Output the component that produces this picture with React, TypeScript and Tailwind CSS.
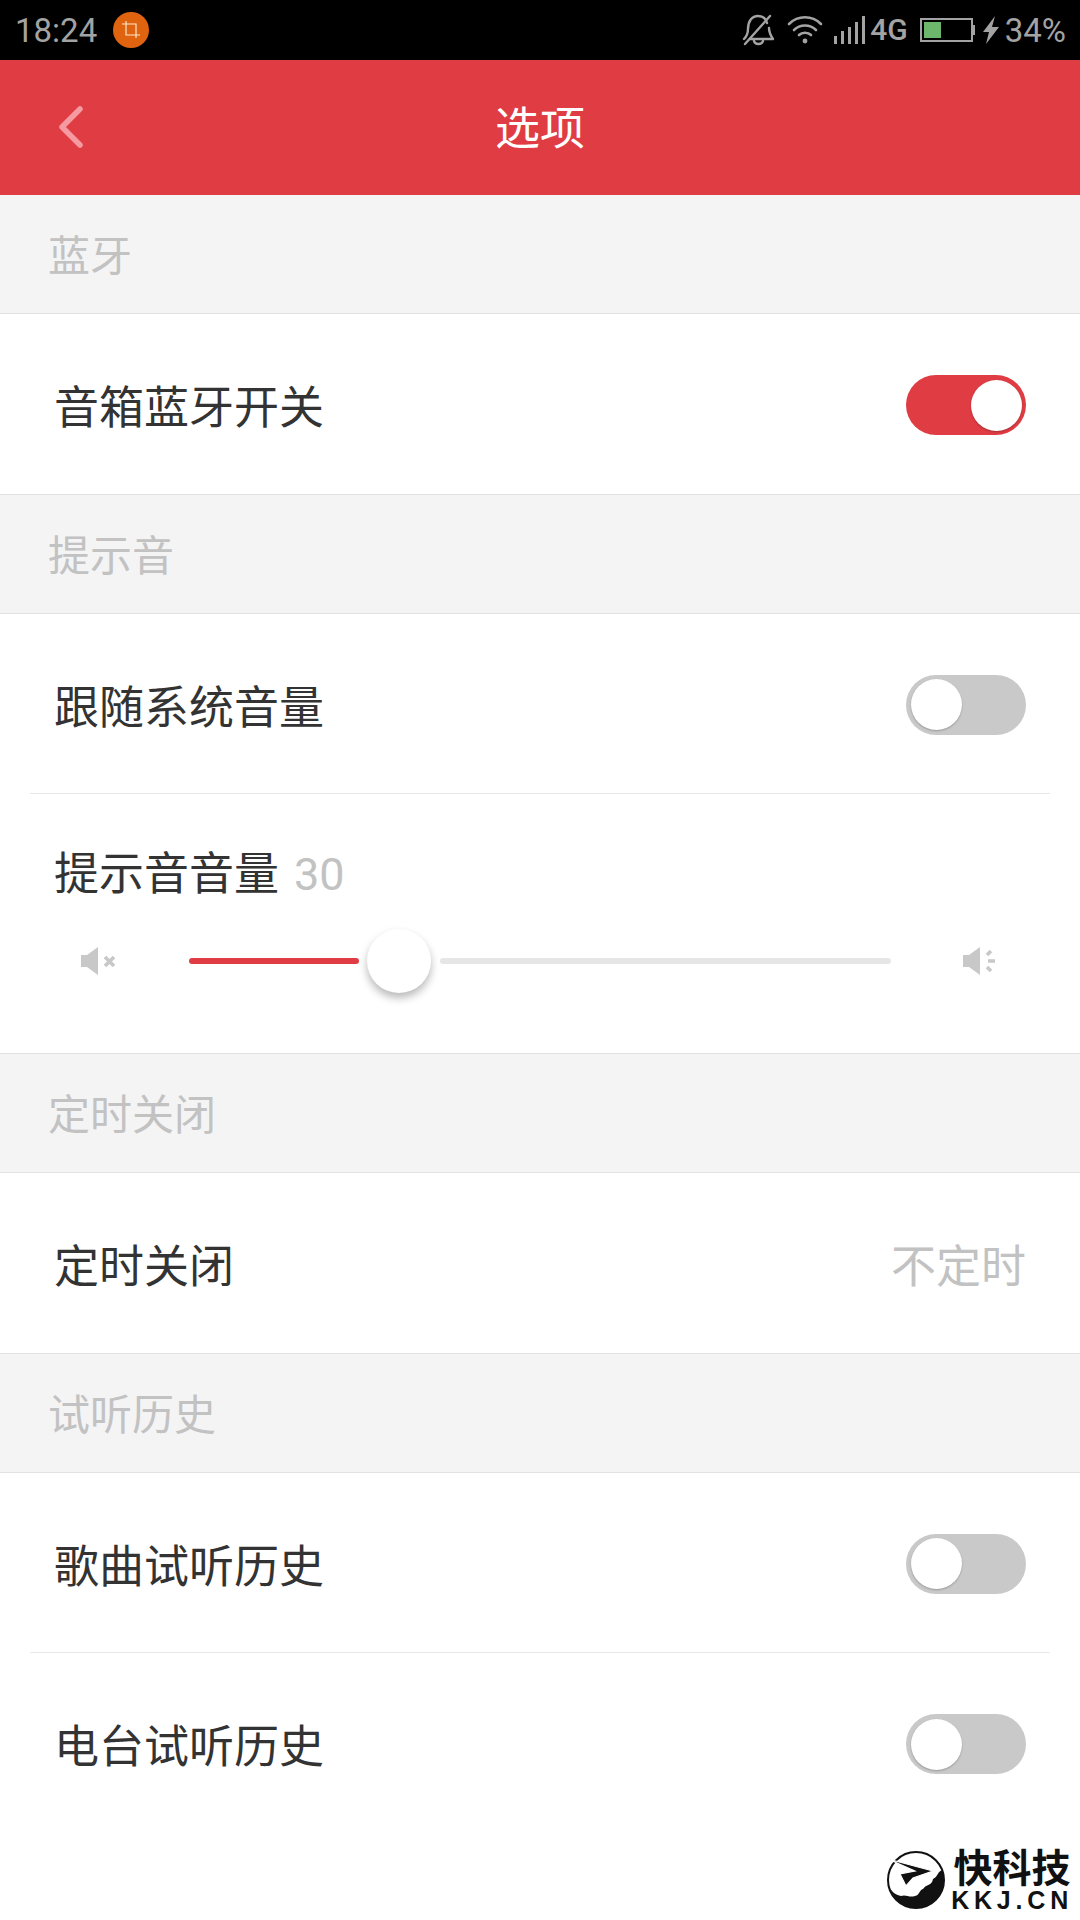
const cjk = "font-['Roboto','Noto_Sans_CJK_SC',sans-serif]";

function Toggle({ on = false }: { on?: boolean }) {
  return (
    <div
      className={`mt-[2px] flex h-[60px] w-[120px] items-center rounded-full ${
        on ? "justify-end bg-[#df3c43] pr-[4px]" : "justify-start bg-[#c9c9c9] pl-[5px]"
      }`}
    >
      <div className="h-[51px] w-[51px] rounded-full bg-white shadow-[0_1px_2px_rgba(0,0,0,0.25)]" />
    </div>
  );
}

function SectionHeader({ title }: { title: string }) {
  return (
    <div className="flex h-[119px] items-center border-b border-[#e2e2e2] bg-[#f4f4f5] pl-[48px] pt-[5px] text-[42px] text-[#c2c2c2]">
      {title}
    </div>
  );
}

function Row({
  title,
  children,
  divider = false,
}: {
  title: string;
  children: React.ReactNode;
  divider?: boolean;
}) {
  return (
    <div className="px-[30px]">
      <div
        className={`flex h-[180px] items-center justify-between pl-[24px] pr-[24px] ${
          divider ? "border-b border-[#e8e8e8]" : ""
        }`}
      >
        <span className="pt-[10px] text-[45px] text-[#333333]">{title}</span>
        {children}
      </div>
    </div>
  );
}

function StatusBar() {
  return (
    <div className="flex h-[60px] items-center justify-between bg-black pl-[15px] pr-[14px] text-[#a3a3a3]">
      <div className="flex items-center gap-[16px]">
        <span className="text-[33px] leading-none">18:24</span>
        <div className="flex h-[36px] w-[36px] items-center justify-center rounded-full bg-[#e0640f]">
          <svg width="20" height="20" viewBox="0 0 20 20" fill="none" stroke="#fde6c8" strokeWidth="1.2">
            <path d="M1 4h14v14M5 1v14h14" />
          </svg>
        </div>
      </div>
      <div className="flex items-center">
        <svg width="32" height="34" viewBox="0 0 32 34" fill="none" stroke="#a3a3a3" strokeWidth="2.4" strokeLinejoin="round" strokeLinecap="round" className="mr-[13px]">
          <path d="M2 26c3-3 4-5 4-10 0-8 4-13 10-13 5 0 8 3 9 7M27 15c0 5 2 8 4 11H8M12 28c1 4 8 4 9 0" />
          <path d="M3 31 28 3" />
        </svg>
        <svg width="36" height="30" viewBox="0 0 36 30" fill="none" stroke="#a3a3a3" strokeWidth="2.6" strokeLinecap="round" className="mr-[11px]">
          <path d="M2 9c9-9 23-9 32 0M7 15c6-6 16-6 22 0M12 20c3-3 9-3 12 0" />
          <circle cx="18" cy="26" r="2.4" fill="#a3a3a3" stroke="none" />
        </svg>
        <svg width="32" height="28" viewBox="0 0 32 28" fill="#a3a3a3" className="mr-[4px]">
          <rect x="0" y="20" width="3" height="8" />
          <rect x="7" y="15" width="3" height="13" />
          <rect x="14" y="11" width="3" height="17" />
          <rect x="21" y="6" width="3" height="22" />
          <rect x="28" y="0" width="3" height="28" />
        </svg>
        <span className="mr-[12px] text-[30px] font-medium leading-none">4G</span>
        <div className="mr-[8px] flex items-center">
          <div className="flex h-[24px] w-[53px] items-center border-2 border-[#a3a3a3] p-[2px]">
            <div className="h-full w-[17px] bg-[#6db76d]" />
          </div>
          <div className="h-[10px] w-[2px] bg-[#a3a3a3]" />
        </div>
        <svg width="16" height="28" viewBox="0 0 16 28" fill="#a3a3a3" className="mr-[6px]">
          <path d="M12 0 0 16h6l-3 12L16 11H9z" />
        </svg>
        <span className="text-[33px] leading-none">34%</span>
      </div>
    </div>
  );
}

function Watermark() {
  return (
    <div className="absolute bottom-[10px] right-[7px] flex items-center gap-[5px]">
      <svg width="60" height="60" viewBox="0 0 60 60">
        <circle cx="30" cy="30" r="28" fill="none" stroke="#111" strokeWidth="2" />
        <path d="M4 38c4 14 16 20 26 20 14 0 28-12 28-28 0-4-1-7-2-10-5 2-4 7-9 9-1 7-7 5-10 10-4 1-3 6-8 7-6 2-9-2-14 0-5-1-8-3-11-8z" fill="#111" />
        <path d="M2 9 47 21 27 28 20 36 14 24 29 21z" fill="#111" stroke="#fff" strokeWidth="1.2" />
      </svg>
      <div className="flex flex-col items-center text-[#111]">
        <span className="h-[37px] text-[39px] font-bold leading-[37px]">快科技</span>
        <span className="mt-[2px] h-[20px] font-['Liberation_Sans',sans-serif] text-[25px] font-bold leading-[20px] tracking-[4.8px]">KKJ.CN</span>
      </div>
    </div>
  );
}

export default function App() {
  return (
    <main className={`relative h-[1920px] w-[1080px] overflow-hidden bg-white ${cjk}`}>
      <StatusBar />
      <header className="relative flex h-[135px] items-center justify-center bg-[#df3c43]">
        <svg width="26" height="42" viewBox="0 0 26 42" fill="none" stroke="#f59aa0" strokeWidth="5.5" strokeLinecap="round" strokeLinejoin="round" className="absolute left-[58px] top-[46px]">
          <path d="M22 3 4 21l18 18" />
        </svg>
        <h1 className="pt-[5px] text-[45px] font-normal text-white">选项</h1>
      </header>

      <SectionHeader title="蓝牙" />
      <Row title="音箱蓝牙开关">
        <Toggle on />
      </Row>

      <div className="border-t border-[#e2e2e2]" />
      <SectionHeader title="提示音" />
      <Row title="跟随系统音量" divider>
        <Toggle />
      </Row>

      <div className="h-[259px] pl-[54px] pr-[55px] pt-[50px]">
        <div className="flex items-center gap-[15px] text-[45px] leading-[62px]">
          <span className="text-[#333333]">提示音音量</span>
          <span className="text-[#c2c2c2]">30</span>
        </div>
        <div className="mt-[22px] flex h-[66px] items-center">
          <svg width="36" height="28" viewBox="0 0 36 28" fill="#c8c8c8" className="ml-[27px] shrink-0">
            <path d="M0 8h6L17 0v28L6 20H0z" />
            <path d="M24 10l9 9M33 10l-9 9" stroke="#c8c8c8" strokeWidth="3.6" />
          </svg>
          <div className="ml-[72px] h-[6px] w-[170px] shrink-0 rounded-full bg-[#df3c43]" />
          <div className="ml-[8px] h-[64px] w-[64px] shrink-0 rounded-full bg-white shadow-[0_5px_8px_rgba(0,0,0,0.28)]" />
          <div className="ml-[9px] h-[6px] w-[451px] shrink-0 rounded-full bg-[#e6e6e6]" />
          <svg width="36" height="28" viewBox="0 0 36 28" fill="#c8c8c8" className="ml-[72px] shrink-0">
            <path d="M0 8h6L17 0v28L6 20H0z" />
            <path d="M24 8l4-4M25 14h7M24 20l4 4" stroke="#c8c8c8" strokeWidth="3.6" />
          </svg>
        </div>
      </div>

      <div className="border-t border-[#e2e2e2]" />
      <SectionHeader title="定时关闭" />
      <Row title="定时关闭">
        <span className="pt-[10px] text-[45px] text-[#c2c2c2]">不定时</span>
      </Row>

      <div className="border-t border-[#e2e2e2]" />
      <SectionHeader title="试听历史" />
      <Row title="歌曲试听历史" divider>
        <Toggle />
      </Row>
      <Row title="电台试听历史">
        <Toggle />
      </Row>

      <Watermark />
    </main>
  );
}
